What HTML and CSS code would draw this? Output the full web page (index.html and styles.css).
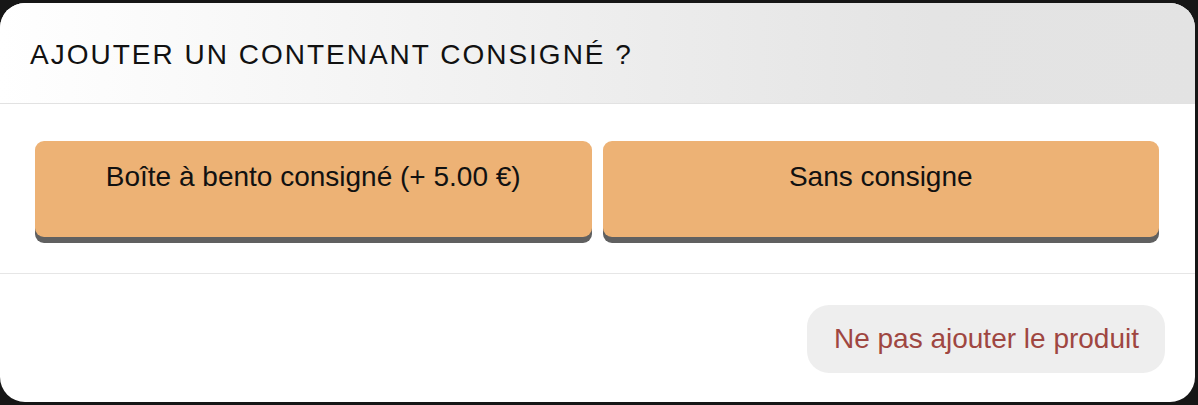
FILE: index.html
```html
<!DOCTYPE html>
<html lang="fr">
<head>
<meta charset="utf-8">
<title>Ajouter un contenant consigné ?</title>
<link rel="stylesheet" href="styles.css">
</head>
<body>
<div class="modal">
  <div class="modal-header">
    <h1 class="modal-title">AJOUTER UN CONTENANT CONSIGNÉ ?</h1>
  </div>
  <div class="modal-body">
    <button class="choice">Boîte à bento consigné (+ 5.00 €)</button>
    <button class="choice">Sans consigne</button>
  </div>
  <div class="modal-footer">
    <button class="cancel">Ne pas ajouter le produit</button>
  </div>
</div>
</body>
</html>
```

FILE: styles.css
```css
html, body {
  margin: 0;
  padding: 0;
}
body {
  background: #161616;
  width: 1198px;
  height: 405px;
  overflow: hidden;
  font-family: "Liberation Sans", Arial, Helvetica, sans-serif;
}
.modal {
  margin-top: 3px;
  width: 1195px;
  height: 399px;
  background: #fff;
  border-radius: 25px;
  overflow: hidden;
  display: flex;
  flex-direction: column;
}
.modal-header {
  height: 101px;
  box-sizing: border-box;
  display: flex;
  align-items: center;
  padding: 3px 0 0 30px;
  background: linear-gradient(to right, #ffffff 0%, #e4e4e4 78%, #e3e3e3 100%);
  border-bottom: 1px solid #e2e2e2;
}
.modal-title {
  margin: 0;
  font-weight: normal;
  font-size: 28px;
  line-height: 32px;
  letter-spacing: 2px;
  color: #111;
}
.modal-body {
  display: flex;
  gap: 11px;
  padding: 37px 36px 36px 35px;
  border-bottom: 1px solid #e6e6e6;
}
.choice {
  flex: 1;
  height: 96px;
  box-sizing: border-box;
  border: none;
  border-radius: 9px;
  background: #edb275;
  box-shadow: 0 6px 0 #606060;
  font-family: inherit;
  font-size: 28px;
  line-height: 32px;
  color: #111;
  padding: 20px 10px 44px;
  text-align: center;
}
.modal-footer {
  flex: 1;
  display: flex;
  justify-content: flex-end;
  align-items: flex-start;
  padding: 31px 30px 0 0;
}
.cancel {
  border: none;
  background: #eeeeee;
  border-radius: 22px;
  font-family: inherit;
  font-size: 28px;
  line-height: 32px;
  color: #9f4641;
  padding: 18px 26px 18px 27px;
}
```
